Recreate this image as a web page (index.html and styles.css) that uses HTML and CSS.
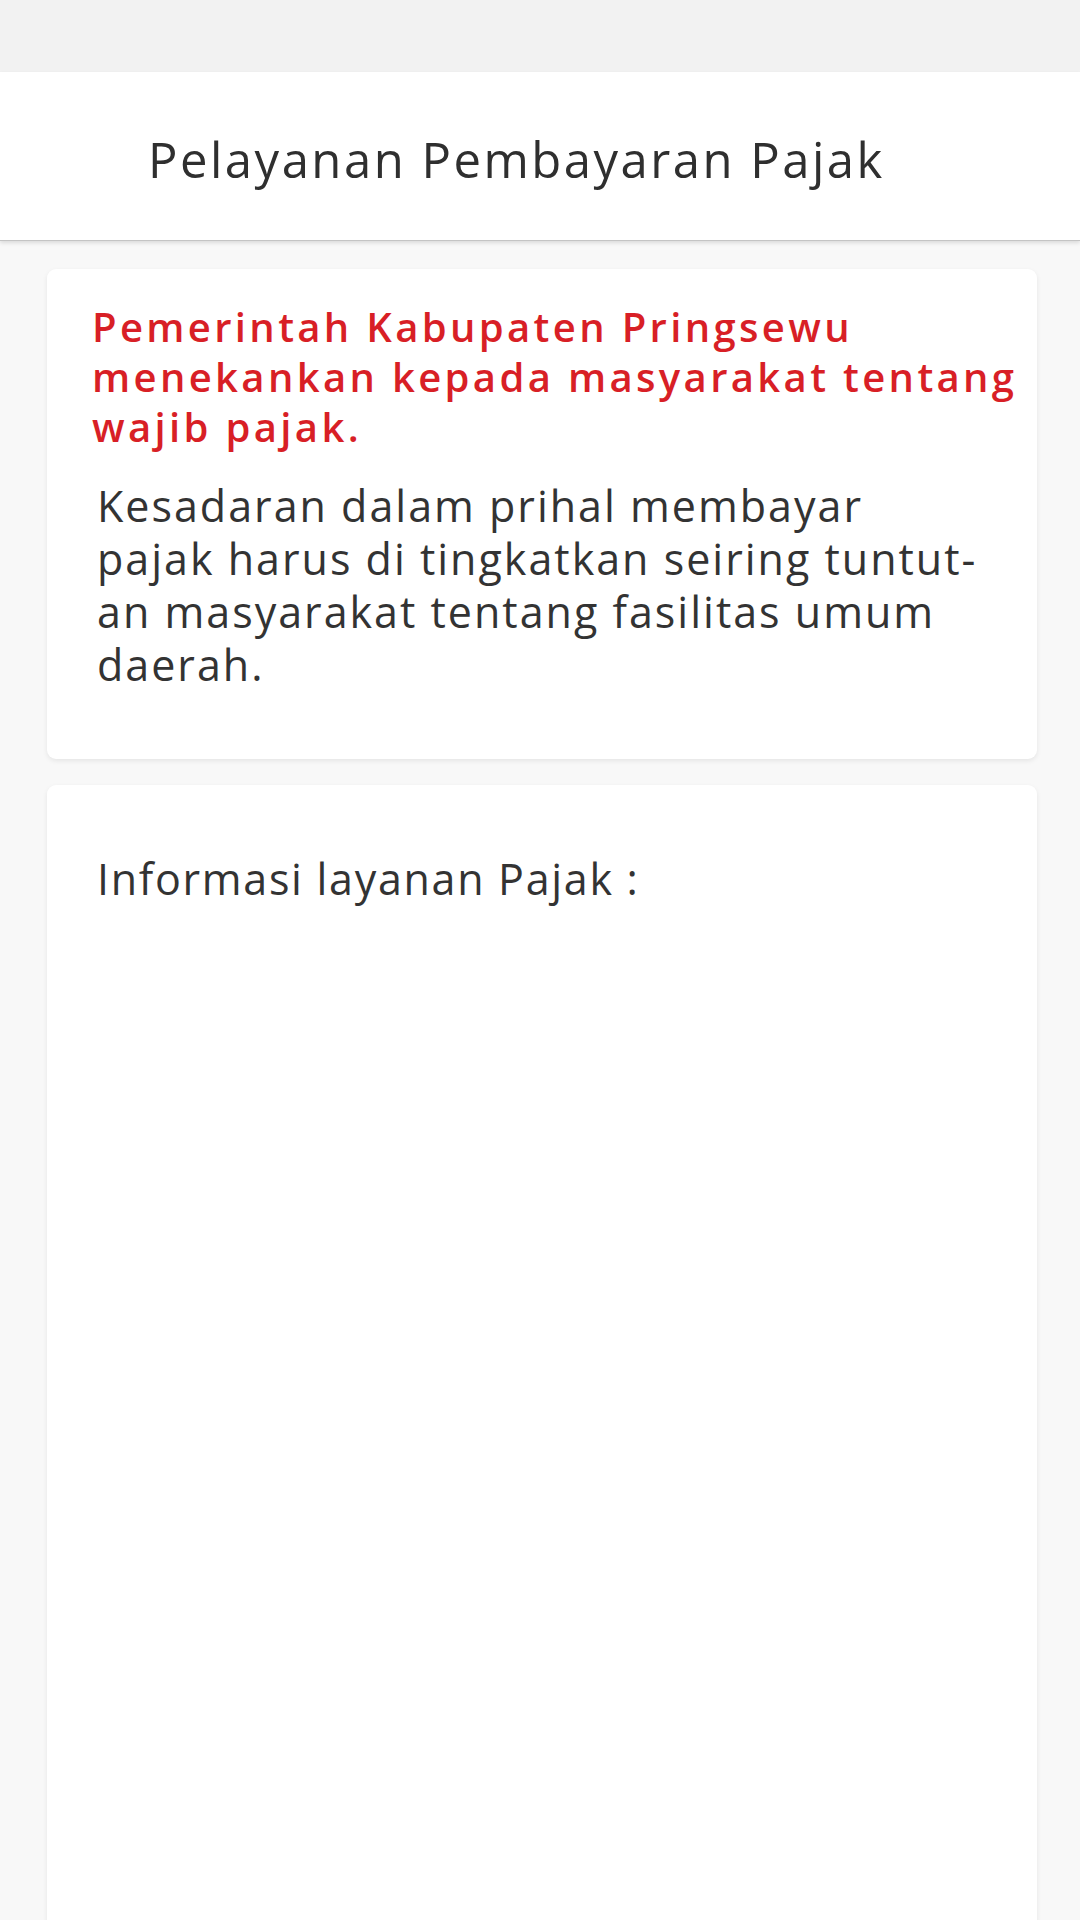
FILE: index.html
```html
<!DOCTYPE html>
<html lang="id">
<head>
<meta charset="utf-8">
<title>Pelayanan Pembayaran Pajak</title>
<link rel="stylesheet" href="styles.css">
</head>
<body>
<div class="statusbar"></div>
<header class="appbar">
  <h1 class="appbar-title">Pelayanan Pembayaran Pajak</h1>
</header>
<main class="content">
  <section class="card card-intro">
    <h2 class="notice">Pemerintah Kabupaten Pringsewu<br>menekankan kepada masyarakat tentang<br>wajib pajak.</h2>
    <p class="body-text">Kesadaran dalam prihal membayar<br>pajak harus di tingkatkan seiring tuntut-<br>an masyarakat tentang fasilitas umum<br>daerah.</p>
  </section>
  <section class="card card-info">
    <p class="info-title">Informasi layanan Pajak :</p>
  </section>
</main>
</body>
</html>
```
FILE: styles.css
```css
html, body {
  margin: 0;
  padding: 0;
}
body {
  background: #f8f8f8;
  font-family: "Open Sans", "Noto Sans", sans-serif;
  color: #333333;
  width: 1080px;
  height: 1920px;
  overflow: hidden;
}
.statusbar {
  height: 72px;
  background: #f2f2f2;
}
.appbar {
  height: 169px;
  box-sizing: border-box;
  background: #ffffff;
  border-bottom: 1px solid #c4c4c4;
  box-shadow: 0 2px 4px rgba(0, 0, 0, 0.12);
  padding: 57px 0 0 148px;
  position: relative;
  z-index: 1;
}
.appbar-title {
  margin: 0;
  font-size: 49px;
  line-height: 60px;
  font-weight: 400;
  letter-spacing: 2.5px;
  color: #2f2f2f;
}
.content {
  padding: 28px 43px 0 47px;
  display: flex;
  flex-direction: column;
  gap: 26px;
}
.card {
  background: #ffffff;
  border-radius: 9px;
  box-shadow: 0 2px 5px rgba(0, 0, 0, 0.08);
}
.card-intro {
  padding: 33px 4px 68px 45px;
}
.notice {
  margin: 0;
  font-size: 40px;
  line-height: 50px;
  font-weight: 600;
  letter-spacing: 3.35px;
  color: #d81f26;
}
.body-text {
  margin: 27px 0 0 5px;
  font-size: 43px;
  line-height: 53px;
  font-weight: 400;
  letter-spacing: 2px;
  color: #333333;
}
.card-info {
  padding: 67px 20px 0 50px;
  min-height: 1200px;
}
.info-title {
  margin: 0;
  font-size: 43px;
  line-height: 53px;
  letter-spacing: 1.7px;
  color: #333333;
}
```
